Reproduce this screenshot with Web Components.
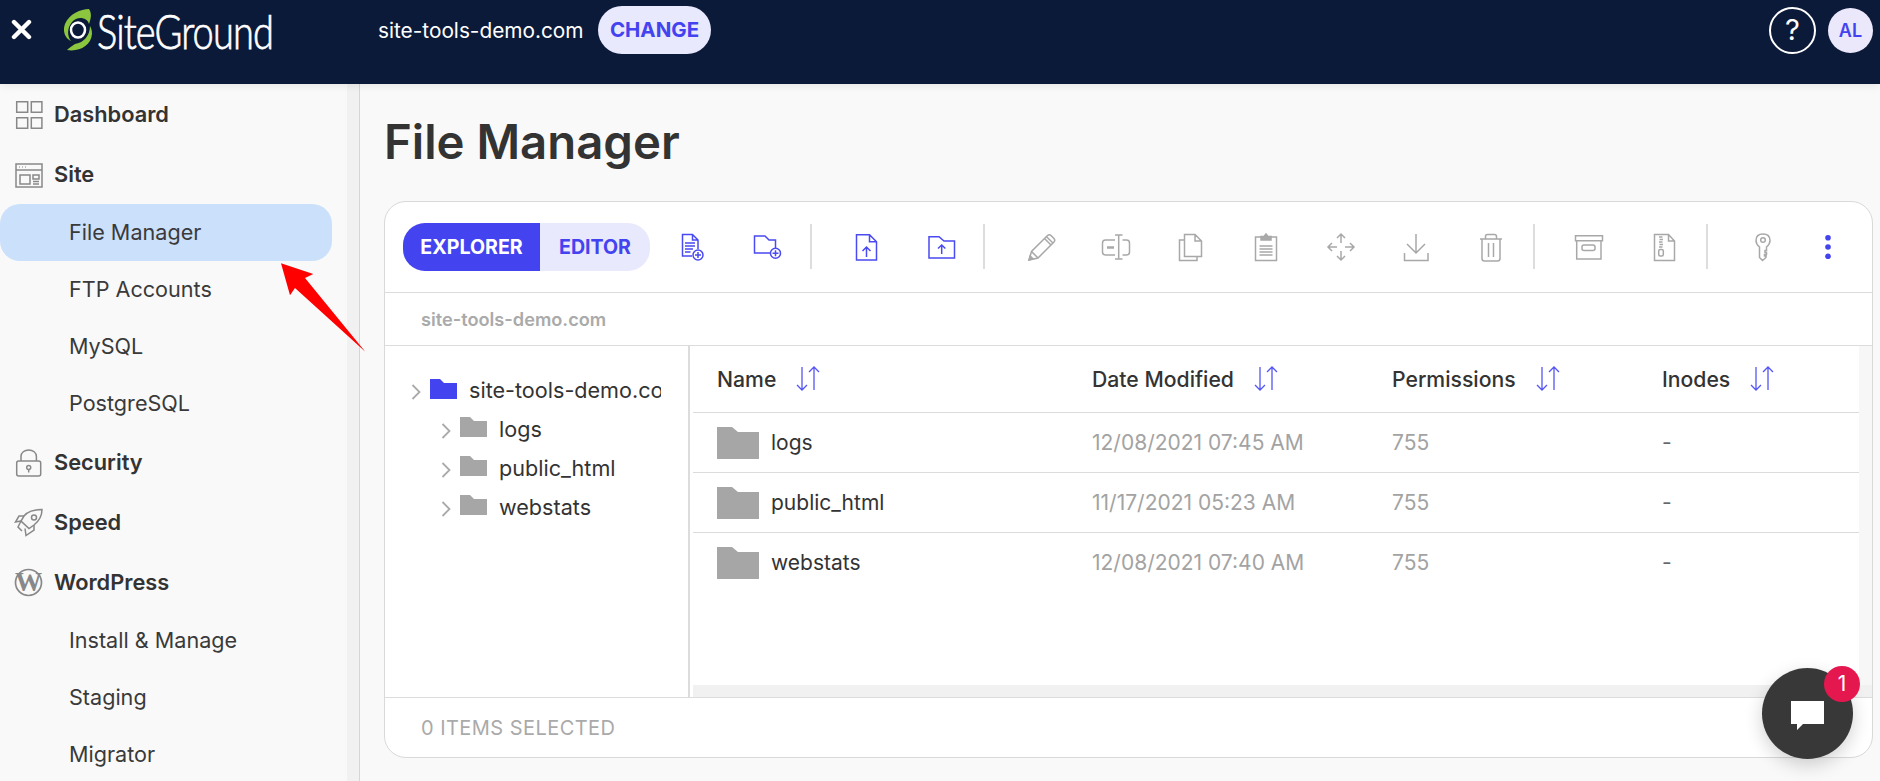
<!DOCTYPE html>
<html lang="en">
<head>
<meta charset="utf-8">
<title>File Manager</title>
<style>
  html, body { margin: 0; height: 100%; overflow: hidden; background: #f9f9f9; }
  body { font-family: Inter, "Liberation Sans", sans-serif; color: #363636; }
</style>
</head>
<body>
<sg-app></sg-app>
<script>
const ICONS = {
  /* sidebar */
  dashboard: '<path d="M3.7 2.7h11v10.6h-11zM18.3 2.7h10.6v10.6H18.300zM3.700 18.700h11v10.600h-11zM18.300 18.700h10.600v10.600H18.300z"/>',
  site: '<rect x="3" y="5" width="26" height="23"/><path d="M3 11h26"/><path d="M6 8h1M9 8h1M12 8h1" stroke-width="1.200"/><path d="M7 16h10v9H7zM20 16h6v4h-6zM20 22.500h6M20 25h6"/>',
  lock: '<rect x="3.700" y="14" width="24" height="15" rx="2"/><path d="M8 14V9.500C8 5.500 11.500 3 15.700 3s7.700 2.500 7.700 6.500V14"/><circle cx="15.700" cy="20.500" r="2"/><path d="M15.700 22.500v3"/>',
  rocket: '<path d="M29 2.500C22 2.500 15 4 11 9l-3 5 8 7.500 5-3.500c5-4 8-8 8-15.500z"/><circle cx="21" cy="10.500" r="2.500"/><path d="M11 9H6L2.500 15l5.500-1M21 18v5l-8 5.500-1-7"/><path d="M8 14l-3 6 4 4"/>',
  wp: '<circle cx="15.500" cy="15.500" r="13" stroke-width="1.700"/>',
  /* toolbar */
  newfile: '<path d="M15 24H5.500V2.500H15.500L21 8V17M15.500 2.500V8H21"/><path d="M8 11H18M8 14H18M8 17H16M8 20H13.500"/><circle cx="21" cy="23" r="5"/><path d="M21 20v6M18 23h6"/>',
  newfolder: '<path d="M18 21H2.500V4H13L17 8H23.500V16"/><circle cx="23.500" cy="21.300" r="5"/><path d="M23.500 18.300v6M20.500 21.300h6"/>',
  upfile: '<path d="M5.500 2.700H18.500L25.500 9.700V28H5.500ZM18.500 2.700V9.700H25.500" stroke-width="1.500"/><path d="M15.500 25V15M11.500 19L15.500 15L19.500 19" stroke-width="1.500"/>',
  upfolder: '<path d="M3 4.700H13L18 9H28.500V26H3Z" stroke-width="1.500"/><path d="M15.700 22V13M12 16.500L15.700 13L19.400 16.500" stroke-width="1.500"/>',
  pencil: '<path d="M3 28L5.500 19.500L21.500 3.500Q23.300 2 25 3.500L28 6.500Q29.500 8.300 28 10L12 26Z"/><path d="M18.500 6.500L25 13M20.500 4.700L27 11M5.500 19.500L12 26"/><path d="M3 28L4.200 24L7 26.800Z" fill="#aaa"/>',
  rename: '<path d="M14 8H4.500Q1.500 8 1.500 11V20Q1.500 23 4.500 23H14M21.500 8H25.500Q28.500 8 28.500 11V20Q28.500 23 25.500 23H21.500"/><path d="M17.700 3V27M14 3H21.500M14 27H21.500"/><path d="M6 15.500H13" stroke-width="2.500"/>',
  copy: '<path d="M8.500 2.500H19L25.500 9V24.500H8.500ZM19 2.500V9H25.500M8.500 8H3.500V28.500H21V24.500"/>',
  paste: '<path d="M10 5H4.500V28.500H25.500V5H20"/><path d="M10 8V4.500H13L15 2L17 4.500H20V8Z" fill="#aaa"/><path d="M8.500 14H21.500M8.500 17H21.500M8.500 20H21.500M8.500 23H21.500"/>',
  move: '<path d="M15 2v9M11 6l4-4 4 4M15 19v9M11 24l4 4 4-4M2 15h9M6 11l-4 4 4 4M19 15h9M24 11l4 4-4 4"/>',
  download: '<path d="M15 2V21M6 12l9 9 9-9M3.500 21V28.500H27V21"/>',
  trash: '<path d="M9.500 6.500V4.500Q9.500 2.500 11.500 2.500H18.500Q20.500 2.500 20.500 4.500V6.500M4 7H26M6 7V26.500Q6 29 8.500 29H21.500Q24 29 24 26.500V7M12.500 11V25M17.500 11V25"/>',
  archive: '<path d="M1.500 3.700H28.500V8.700H1.500ZM2.700 8.700V27H27V8.700"/><rect x="8" y="13" width="13" height="5.500" rx="2"/>',
  zip: '<path d="M5.500 2.500H19.500L25.500 9V28.500H5.500ZM19.500 2.500V9H25.500"/><path d="M10 5H13.500M10.500 7.500H14M10 10H13.500M10.500 12.500H14M10 15H13.500"/><rect x="9.700" y="17.500" width="4.600" height="6.500" rx="1.500"/>',
  key: '<path d="M15 2Q8 2 8 8.500Q8 12 11.500 15V25.500L14.500 28.500L18 25.500V24H16.500V22.500H18.500V20.500H17V18.500H18.500V15Q22 12 22 8.500Q22 2 15 2Z"/><circle cx="15" cy="8" r="2.300"/>',
  dots: '<circle cx="15" cy="5.700" r="2.800" fill="#4343f0" stroke="none"/><circle cx="15" cy="15" r="2.800" fill="#4343f0" stroke="none"/><circle cx="15" cy="24.300" r="2.800" fill="#4343f0" stroke="none"/>'
};

class SgApp extends HTMLElement {
  connectedCallback() {
    this.attachShadow({mode: 'open'}).innerHTML = `
      <style>
        :host { display: flex; flex-direction: column; height: 781px; position: relative; overflow: hidden; background: #f9f9f9; }
        .below { display: flex; flex: 1; min-height: 0; }
        .arrow { position: absolute; left: 0; top: 0; pointer-events: none; }
      </style>
      <sg-header></sg-header>
      <div class="below">
        <sg-sidebar></sg-sidebar>
        <fm-page></fm-page>
      </div>
      <svg class="arrow" width="380" height="360" viewBox="0 0 380 360"><path d="M281 263.300L313.300 274L305 278L365.300 351.700L295 288L290 295.300Z" fill="#fe0000"/></svg>
      <sg-chat></sg-chat>`;
  }
}

class SgHeader extends HTMLElement {
  connectedCallback() {
    this.attachShadow({mode: 'open'}).innerHTML = `
      <style>
        :host { display: flex; align-items: center; box-sizing: border-box; height: 84px; flex: none; padding: 0 7px 24px 11px; background: #0c1a3a; color: #fff; position: relative; z-index: 2; box-shadow: 0 2px 8px rgba(0,0,0,.08); }
        .close { width: 21px; height: 21px; flex: none; margin-right: 31px; margin-top: -2px; }
        .logo { display: flex; align-items: center; width: 210px; height: 48px; flex: none; }
        .word { display: inline-block; font: 300 38px/48px Lato, sans-serif; letter-spacing: -.9px; transform: scaleY(1.25); white-space: nowrap; margin-left: 4px; -webkit-text-stroke: .6px #fff; }
        .domain { margin-left: 105px; width: 207px; flex: none; font-size: 20.800px; white-space: nowrap; }
        .change { margin-left: 13px; flex: none; width: 113px; height: 48px; border-radius: 24px; background: #e9e9fd; color: #4343f0; font-weight: 700; font-size: 20.500px; line-height: 48px; text-align: center; }
        .gap { flex: 1; }
        .help { width: 47px; height: 47px; box-sizing: border-box; border: 2px solid #fff; border-radius: 50%; text-align: center; font-size: 29px; line-height: 42px; margin-right: 12px; }
        .me { width: 45px; height: 45px; border-radius: 50%; background: #ebe8fb; color: #4343f0; font-weight: 600; font-size: 18px; line-height: 45px; text-align: center; }
      </style>
      <svg class="close" viewBox="0 0 21 21"><path d="M3 3L18 18M18 3L3 18" stroke="#fff" stroke-width="4.400" stroke-linecap="round"/></svg>
      <div class="logo">
        <svg width="30" height="44" viewBox="0 0 30 44" style="flex:none">
          <path d="M26 1C18 1 6 6 2 16C-1 24 3 31 8 33C4 28 4 20 9 14C14 8 24 9 26 16C28 11 29 5 26 1Z" fill="#8cc63f"/>
          <path d="M4 42C16 44 28 38 29 26C29 22 28 20 27 18C27 28 20 35 12 36C9 38 6 40 4 42Z" fill="#8cc63f"/>
          <ellipse cx="15" cy="22" rx="7" ry="7.500" fill="none" stroke="#fff" stroke-width="2.500"/>
        </svg>
        <span class="word">SiteGround</span>
      </div>
      <div class="domain">site-tools-demo.com</div>
      <div class="change">CHANGE</div>
      <div class="gap"></div>
      <div class="help">?</div>
      <div class="me">AL</div>`;
  }
}

class SgNavItem extends HTMLElement {
  connectedCallback() {
    let icon = this.getAttribute('icon');
    let glyph = icon ? `<svg viewBox="0 0 31 31" width="31" height="31" fill="none" stroke="#888" stroke-width="1.500">${ICONS[icon]}${icon == 'wp' ? '<text x="15.500" y="24" text-anchor="middle" font-family="Liberation Serif, serif" font-weight="700" font-size="27" fill="#888" stroke="none">W</text>' : ''}</svg>` : '';
    this.attachShadow({mode: 'open'}).innerHTML = `
      <style>
        :host { display: flex; align-items: center; box-sizing: border-box; height: 57px; padding: 0 0 2px 69px; margin-right: 14px; font-size: 21.600px; color: #3a3a3a; white-space: nowrap; }
        :host([group]) { height: 60px; padding: 0 0 0 13px; gap: 10px; font-weight: 600; font-size: 21.800px; color: #333; }
        :host([selected]) { background: #cbe0fb; border-radius: 20px; }
      </style>
      ${glyph}<slot></slot>`;
  }
}

class SgSidebar extends HTMLElement {
  connectedCallback() {
    this.attachShadow({mode: 'open'}).innerHTML = `
      <style>
        :host { display: block; box-sizing: border-box; width: 360px; height: 697px; flex: none; padding-right: 13px; overflow: hidden; background: #f9f9f9; border-right: 1px solid #d6d6d6; box-shadow: inset -12px 0 0 #f1f1f1; }
      </style>
      <sg-nav-item group icon="dashboard">Dashboard</sg-nav-item>
      <sg-nav-item group icon="site">Site</sg-nav-item>
      <sg-nav-item selected>File Manager</sg-nav-item>
      <sg-nav-item>FTP Accounts</sg-nav-item>
      <sg-nav-item>MySQL</sg-nav-item>
      <sg-nav-item>PostgreSQL</sg-nav-item>
      <sg-nav-item group icon="lock">Security</sg-nav-item>
      <sg-nav-item group icon="rocket">Speed</sg-nav-item>
      <sg-nav-item group icon="wp">WordPress</sg-nav-item>
      <sg-nav-item>Install &amp; Manage</sg-nav-item>
      <sg-nav-item>Staging</sg-nav-item>
      <sg-nav-item>Migrator</sg-nav-item>`;
  }
}

class FmPage extends HTMLElement {
  connectedCallback() {
    this.attachShadow({mode: 'open'}).innerHTML = `
      <style>
        :host { display: block; flex: 1; min-width: 0; box-sizing: border-box; padding: 0 7px 0 24px; }
        h1 { margin: 0; padding: 32px 0 33px 0; font-size: 47.300px; line-height: 52px; font-weight: 600; color: #333; }
      </style>
      <h1>File Manager</h1>
      <fm-card></fm-card>`;
  }
}

class FmCard extends HTMLElement {
  connectedCallback() {
    this.attachShadow({mode: 'open'}).innerHTML = `
      <style>
        :host { display: flex; flex-direction: column; box-sizing: border-box; height: 557px; background: #fff; border: 1px solid #d9d9d9; border-radius: 22px; overflow: hidden; }
        .crumb { height: 53px; flex: none; box-sizing: border-box; border-bottom: 1px solid #dcdcdc; padding-left: 36px; font-size: 18.200px; font-weight: 600; line-height: 53px; color: #aaa; }
        .body { flex: 1; display: flex; min-height: 0; }
        .foot { height: 59px; flex: none; border-top: 1px solid #dcdcdc; padding-left: 36px; font-size: 20px; line-height: 60px; color: #aaa; letter-spacing: .45px; }
      </style>
      <fm-toolbar></fm-toolbar>
      <div class="crumb">site-tools-demo.com</div>
      <div class="body">
        <fm-tree></fm-tree>
        <fm-table></fm-table>
      </div>
      <div class="foot">0 ITEMS SELECTED</div>`;
  }
}

class FmTool extends HTMLElement {
  connectedCallback() {
    let color = this.hasAttribute('on') ? '#4a4af2' : '#a8a8a8';
    this.attachShadow({mode: 'open'}).innerHTML = `
      <style>
        :host { display: flex; align-items: center; justify-content: center; width: 75px; flex: none; }
        :host([small]) { width: 56px; }
        svg { width: 30px; height: 30px; }
      </style>
      <svg viewBox="0 0 30 30" fill="none" stroke="${color}" stroke-width="1.500">${ICONS[this.getAttribute('icon')]}</svg>`;
  }
}

class FmToolbar extends HTMLElement {
  connectedCallback() {
    this.attachShadow({mode: 'open'}).innerHTML = `
      <style>
        :host { display: flex; align-items: center; height: 91px; flex: none; box-sizing: border-box; border-bottom: 1px solid #dcdcdc; padding: 0 0 1px 18px; }
        .tabs { display: flex; height: 48px; width: 247px; flex: none; margin-right: 4.500px; border-radius: 22px; overflow: hidden; font-weight: 700; font-size: 19.600px; line-height: 48px; text-align: center; background: #e9e9fd; color: #4343f0; }
        .tabs b { width: 137px; background: #4343f0; color: #fff; font-weight: 700; }
        .tabs span { flex: 1; }
        i { display: block; width: 2px; height: 45px; flex: none; background: #ddd; margin: 0 16.500px 0 5px; }
        i.wide { margin-right: 18px; }
        i.tight { margin-right: 17px; margin-left: 4.500px; }
      </style>
      <div class="tabs"><b>EXPLORER</b><span>EDITOR</span></div>
      <fm-tool on icon="newfile"></fm-tool>
      <fm-tool on icon="newfolder"></fm-tool>
      <i></i>
      <fm-tool on icon="upfile"></fm-tool>
      <fm-tool on icon="upfolder"></fm-tool>
      <i class="wide"></i>
      <fm-tool icon="pencil"></fm-tool>
      <fm-tool icon="rename"></fm-tool>
      <fm-tool icon="copy"></fm-tool>
      <fm-tool icon="paste"></fm-tool>
      <fm-tool icon="move"></fm-tool>
      <fm-tool icon="download"></fm-tool>
      <fm-tool icon="trash"></fm-tool>
      <i></i>
      <fm-tool icon="archive"></fm-tool>
      <fm-tool icon="zip"></fm-tool>
      <i class="tight"></i>
      <fm-tool icon="key"></fm-tool>
      <fm-tool small icon="dots"></fm-tool>`;
  }
}

class FmTreeRow extends HTMLElement {
  connectedCallback() {
    let root = this.hasAttribute('root');
    this.attachShadow({mode: 'open'}).innerHTML = `
      <style>
        :host { display: flex; align-items: center; height: 39px; padding-left: 56px; white-space: nowrap; font-size: 21.600px; color: #333; }
        :host([root]) { height: 38px; padding-left: 26px; }
        .chev { flex: none; margin-right: 9px; margin-top: 4px; }
        .dir { flex: none; margin-right: 12px; margin-top: -3px; }
      </style>
      <svg class="chev" width="10" height="16" viewBox="0 0 10 16" fill="none" stroke="#aaa" stroke-width="1.800"><path d="M1.500 1L8.500 8L1.500 15"/></svg>
      <svg class="dir" width="27" height="20" viewBox="0 0 27 20" fill="${root ? '#4343f0' : '#a6a6a6'}"><path d="M0 0H10L14 4H27V20H0Z"/></svg>
      <slot></slot>`;
  }
}

class FmTree extends HTMLElement {
  connectedCallback() {
    this.attachShadow({mode: 'open'}).innerHTML = `
      <style>
        :host { display: block; box-sizing: border-box; width: 305px; flex: none; border-right: 2px solid #dcdcdc; padding: 25px 27px 0 0; }
        .clip { overflow: hidden; }
      </style>
      <div class="clip">
        <fm-tree-row root>site-tools-demo.com</fm-tree-row>
        <fm-tree-row>logs</fm-tree-row>
        <fm-tree-row>public_html</fm-tree-row>
        <fm-tree-row>webstats</fm-tree-row>
      </div>`;
  }
}

class FmSortHead extends HTMLElement {
  connectedCallback() {
    this.attachShadow({mode: 'open'}).innerHTML = `
      <style>
        :host { display: flex; align-items: center; gap: 20px; font-weight: 500; font-size: 21.200px; color: #333; }
        svg { flex: none; margin-top: -2px; }
      </style>
      <slot></slot>
      <svg width="24" height="25" viewBox="0 0 24 25" fill="none" stroke="#5555f5" stroke-width="1.300"><path d="M6 1V24M1 19L6 24L11 19M18 24V1M13 6L18 1L23 6"/></svg>`;
  }
}

class FmRow extends HTMLElement {
  connectedCallback() {
    this.attachShadow({mode: 'open'}).innerHTML = `
      <style>
        :host { display: grid; grid-template-columns: 375px 300px 270px 1fr; align-items: center; box-sizing: border-box; height: 60px; padding-left: 24px; border-top: 1px solid #dcdcdc; font-size: 21px; color: #a3a3a3; }
        .name { display: flex; align-items: center; gap: 12px; color: #333; }
        svg { flex: none; }
      </style>
      <div class="name">
        <svg width="42" height="32" viewBox="0 0 42 32" fill="#a6a6a6"><path d="M0 0H15L21 5H42V32H0Z"/></svg>
        <span>${this.getAttribute('name')}</span>
      </div>
      <div>${this.getAttribute('date')}</div>
      <div>755</div>
      <div style="color:#666">-</div>`;
  }
}

class FmTable extends HTMLElement {
  connectedCallback() {
    this.attachShadow({mode: 'open'}).innerHTML = `
      <style>
        :host { display: flex; flex-direction: column; flex: 1; min-width: 0; margin-left: 3px; }
        .wrap { flex: 1; min-height: 0; display: flex; }
        .list { flex: 1; min-width: 0; }
        .vtrack { width: 13px; flex: none; background: #f7f7f7; }
        .htrack { height: 12px; flex: none; background: #f1f1f1; }
        .head { display: grid; grid-template-columns: 375px 300px 270px 1fr; align-items: center; height: 66px; padding-left: 24px; }
      </style>
      <div class="wrap">
        <div class="list">
          <div class="head">
            <fm-sort-head>Name</fm-sort-head>
            <fm-sort-head>Date Modified</fm-sort-head>
            <fm-sort-head>Permissions</fm-sort-head>
            <fm-sort-head>Inodes</fm-sort-head>
          </div>
          <fm-row name="logs" date="12/08/2021 07:45 AM"></fm-row>
          <fm-row name="public_html" date="11/17/2021 05:23 AM"></fm-row>
          <fm-row name="webstats" date="12/08/2021 07:40 AM"></fm-row>
        </div>
        <div class="vtrack"></div>
      </div>
      <div class="htrack"></div>`;
  }
}

class SgChat extends HTMLElement {
  connectedCallback() {
    this.attachShadow({mode: 'open'}).innerHTML = `
      <style>
        :host { position: absolute; left: 1762px; top: 668px; width: 91px; height: 91px; border-radius: 50%; background: #383838; box-shadow: 0 6px 18px rgba(0,0,0,.18); display: flex; align-items: center; justify-content: center; }
        svg { margin-top: 3px; margin-left: -1px; }
        b { position: absolute; left: 62px; top: -2px; width: 36px; height: 36px; border-radius: 50%; background: #e5174f; color: #fff; font-weight: 400; font-size: 21px; line-height: 36px; text-align: center; }
      </style>
      <svg width="33" height="29" viewBox="0 0 33 29" fill="#fff"><path d="M0 0H33V23H12L6 29V23H0Z"/></svg>
      <b>1</b>`;
  }
}

customElements.define('sg-header', SgHeader);
customElements.define('sg-nav-item', SgNavItem);
customElements.define('sg-sidebar', SgSidebar);
customElements.define('fm-tool', FmTool);
customElements.define('fm-toolbar', FmToolbar);
customElements.define('fm-tree-row', FmTreeRow);
customElements.define('fm-tree', FmTree);
customElements.define('fm-sort-head', FmSortHead);
customElements.define('fm-row', FmRow);
customElements.define('fm-table', FmTable);
customElements.define('fm-card', FmCard);
customElements.define('fm-page', FmPage);
customElements.define('sg-chat', SgChat);
customElements.define('sg-app', SgApp);
</script>
</body>
</html>
